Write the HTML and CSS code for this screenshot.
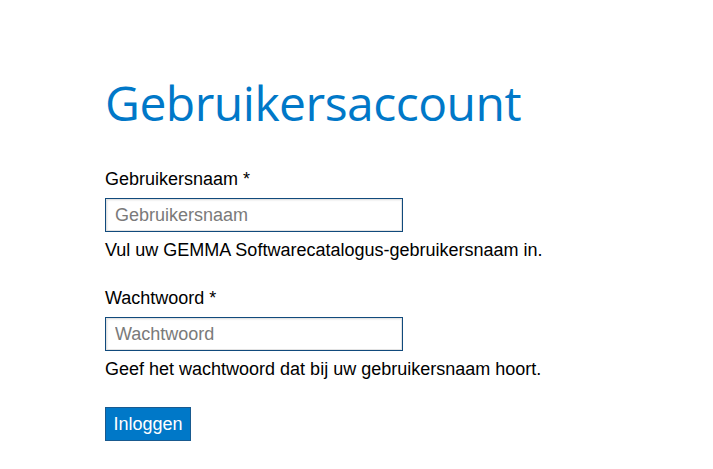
FILE: index.html
```html
<!DOCTYPE html>
<html lang="nl">
<head>
<meta charset="utf-8">
<title>Gebruikersaccount</title>
<link rel="stylesheet" href="styles.css">
</head>
<body>
<main class="page">
  <h1 class="title">Gebruikersaccount</h1>
  <form class="login">
    <div class="field">
      <label class="label" for="user">Gebruikersnaam *</label>
      <input class="input" id="user" type="text" placeholder="Gebruikersnaam">
      <div class="help">Vul uw GEMMA Softwarecatalogus-gebruikersnaam in.</div>
    </div>
    <div class="field">
      <label class="label" for="pass">Wachtwoord *</label>
      <input class="input" id="pass" type="password" placeholder="Wachtwoord">
      <div class="help">Geef het wachtwoord dat bij uw gebruikersnaam hoort.</div>
    </div>
    <div class="actions">
      <button class="btn" type="button">Inloggen</button>
    </div>
  </form>
</main>
</body>
</html>
```
FILE: styles.css
```css
html, body {
  margin: 0;
  padding: 0;
  background: #ffffff;
}
body {
  font-family: "Liberation Sans", Arial, sans-serif;
  font-size: 18px;
  color: #000000;
}
.page {
  padding: 70px 0 0 105px;
}
.title {
  margin: 0;
  font-family: "Open Sans", "Noto Sans", sans-serif;
  font-weight: 400;
  font-size: 48px;
  line-height: 66px;
  color: #0078c8;
  letter-spacing: -0.5px;
}
.login {
  margin-top: 33px;
  display: flex;
  flex-direction: column;
  gap: 28px;
}
.field {
  display: flex;
  flex-direction: column;
  align-items: flex-start;
}
.label {
  line-height: 20px;
  margin-bottom: 9px;
}
.input {
  box-sizing: border-box;
  width: 298px;
  height: 34px;
  margin: 0;
  padding: 0 9px;
  border: 1px solid #114a7c;
  border-radius: 0;
  box-shadow: inset 0 0 0 1px #e3e3e3, inset 1px 1px 2px #d5d5d5;
  font-family: "Liberation Sans", Arial, sans-serif;
  font-size: 18px;
  color: #000;
  background: #fff;
}
.input::placeholder {
  color: #7a7a7a;
}
.help {
  margin-top: 8px;
  line-height: 20px;
}
.btn {
  box-sizing: border-box;
  height: 34px;
  width: 86px;
  padding: 0;
  border: 1px solid #195a8f;
  background: #0078c8;
  color: #ffffff;
  font-family: "Liberation Sans", Arial, sans-serif;
  font-size: 18px;
  border-radius: 0;
}
```
